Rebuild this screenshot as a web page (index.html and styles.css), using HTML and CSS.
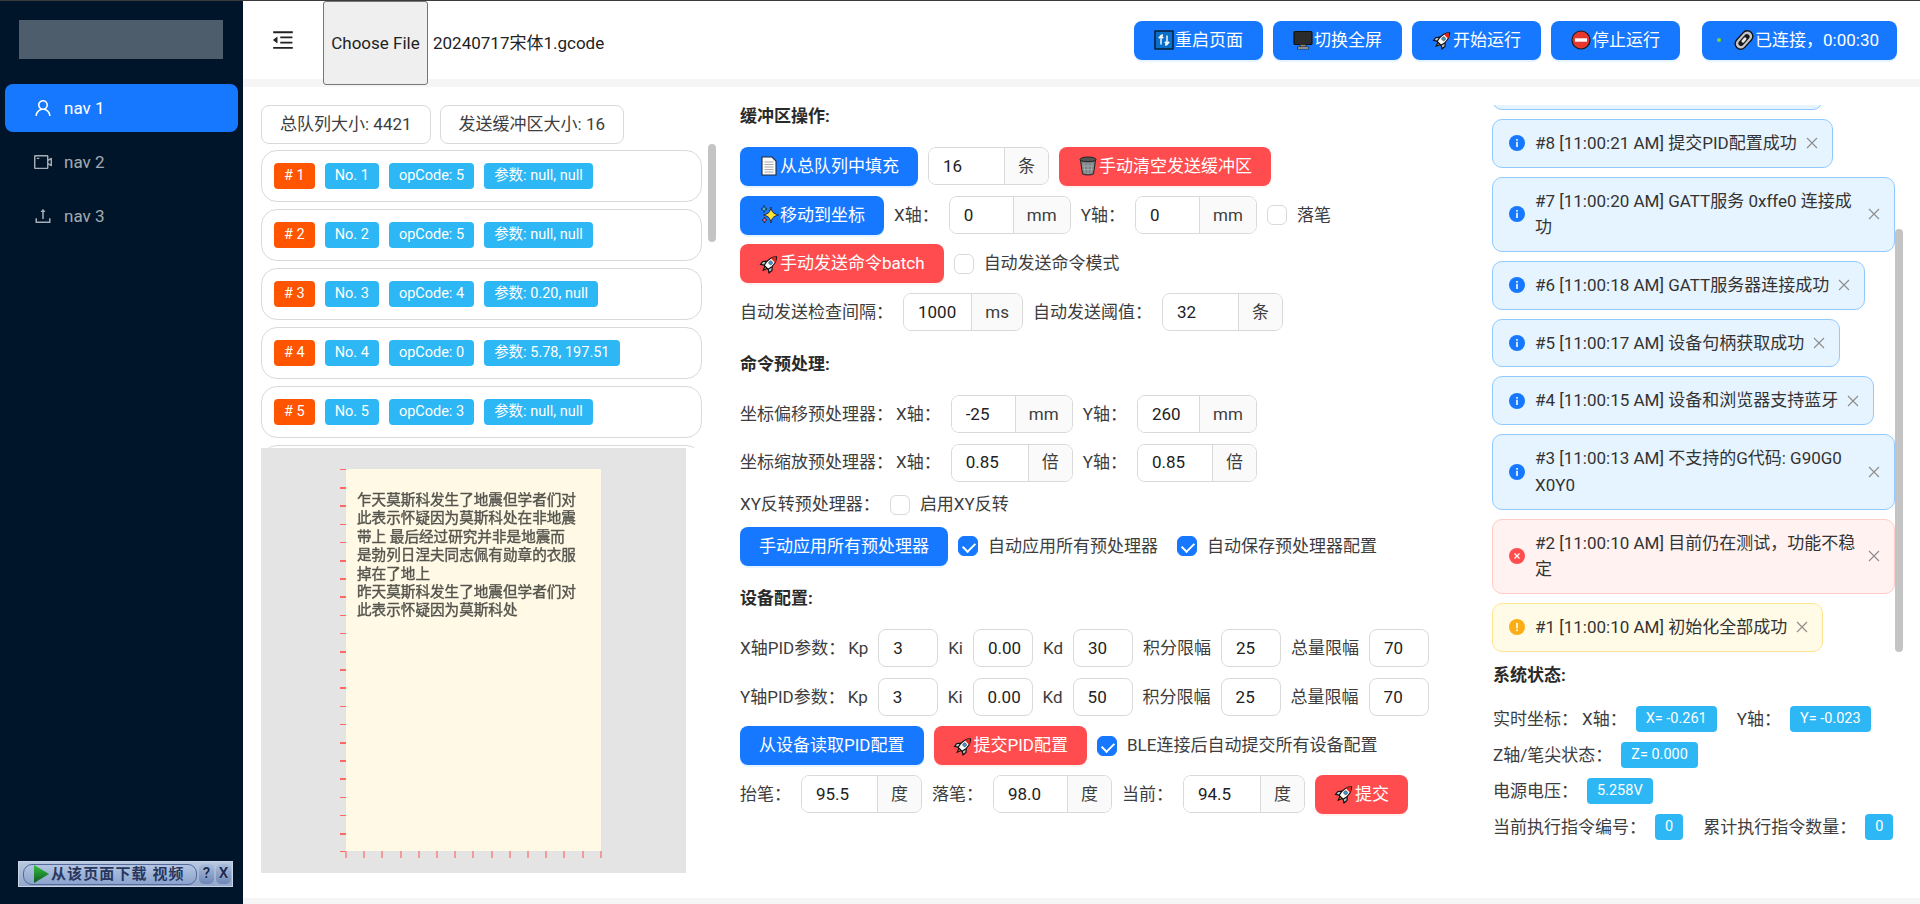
FILE: index.html
```html
<!DOCTYPE html>
<html lang="zh-CN">
<head>
  <meta charset="UTF-8" />
  <meta name="viewport" content="width=device-width, initial-scale=1.0"/>
  <title>Plotter</title>
  <link rel="stylesheet" href="styles.css">
</head>
<body>
  <!-- emoji drawn once, reused below -->
  <svg class="defs" aria-hidden="true">
    <symbol id="e-sync" viewBox="0 0 20 20">
      <rect x="1" y="1" width="18" height="18" fill="#0a6fc8" stroke="#07192b" stroke-width="1.400"/>
      <path d="M7 14.500V7c0-1.500 1-2 2-2M4.800 8.200 7 5.600 9.200 8.200M13 5.500V13c0 1.500-1 2-2 2M10.800 11.800l2.200 2.600 2.200-2.600" fill="none" stroke="#fff" stroke-width="1.400"/>
    </symbol>
    <symbol id="e-monitor" viewBox="0 0 20 20">
      <rect x="1" y="1.500" width="18" height="13" rx="1" fill="#2b2b2b" stroke="#111" stroke-width="1.200"/>
      <rect x="7" y="14.500" width="6" height="2.500" fill="#888" stroke="#222" stroke-width=".7"/>
      <rect x="4.500" y="17" width="11" height="2" fill="#c8c8c8" stroke="#222" stroke-width=".7"/>
    </symbol>
    <symbol id="e-rocket" viewBox="0 0 20 20">
      <g transform="translate(1 -.5) rotate(45 10 10) scale(.92) translate(.8 .8)">
        <path d="M6.500 10 3 14l.5 4 4-2.500zM13.500 10l3.500 4-.5 4-4-2.500z" fill="#b9c2cc" stroke="#111" stroke-width="1.300"/>
        <path d="M8 15.500l2 5 2-5z" fill="#f7941e" stroke="#111" stroke-width="1.200"/>
        <path d="M10 0C13.500 3 14 7 14 11l-1 5H7l-1-5c0-4 .5-8 4-11z" fill="#fbfbfb" stroke="#111" stroke-width="1.300"/>
        <path d="M10 .6c1.800 1.500 2.800 3 3.300 4.900H6.700C7.200 3.600 8.200 2.100 10 .6z" fill="#e2231a"/>
        <circle cx="10" cy="9" r="2" fill="#3b9ae1" stroke="#555" stroke-width=".8"/>
      </g>
    </symbol>
    <symbol id="e-stop" viewBox="0 0 20 20">
      <circle cx="10" cy="10" r="9" fill="#e8382d" stroke="#1c1c1c" stroke-width="1.200"/>
      <rect x="4" y="8.300" width="12" height="3.400" fill="#fff"/>
    </symbol>
    <symbol id="e-link" viewBox="0 0 20 20">
      <g transform="rotate(-48 10 10)">
        <rect x="-.5" y="4.500" width="21" height="11" rx="5.500" fill="#c4c6c9" stroke="#111" stroke-width="1.400"/>
        <rect x="3" y="7.300" width="14" height="5.400" rx="2.700" fill="#1a1a1a"/>
        <rect x="7" y="8.600" width="6" height="2.800" rx="1.400" fill="#e8e8e8"/>
      </g>
    </symbol>
    <symbol id="e-page" viewBox="0 0 20 20">
      <path d="M3 1h10l4 4v14H3z" fill="#fafafa" stroke="#1f2a3a" stroke-width="1.100"/>
      <path d="M5.500 6h9M5.500 8.500h9M5.500 11h9M5.500 13.500h9M5.500 16h9" stroke="#a9a9a9" stroke-width="1"/>
    </symbol>
    <symbol id="e-trash" viewBox="0 0 20 20">
      <ellipse cx="10" cy="3.500" rx="8" ry="2.500" fill="#555" stroke="#222" stroke-width="1"/>
      <path d="M2.500 4.500 4.500 18c2 1.300 9 1.300 11 0l2-13.500c-3 1.500-12 1.500-15 0z" fill="#7d8487" stroke="#222" stroke-width="1"/>
      <path d="M6 7l1 10M10 7.500V18M14 7l-1 10M4 10h12M4.500 13.500h11" stroke="#a5abad" stroke-width=".8"/>
    </symbol>
    <symbol id="e-spark" viewBox="0 0 20 20">
      <path d="M12 2c.8 5 2.200 6.700 7.500 8-5.300 1.300-6.700 3-7.500 8-.8-5-2.200-6.700-7.500-8C9.800 8.700 11.200 7 12 2z" fill="#ffe23b" stroke="#222" stroke-width=".9"/>
      <path d="M5 .5c.3 2 1 2.700 3 3.500-2 .8-2.700 1.500-3 3.500-.3-2-1-2.700-3-3.500 2-.8 2.700-1.500 3-3.500z" fill="#3fb4d8" stroke="#222" stroke-width=".8"/>
      <path d="M5.500 12c.3 1.800.9 2.400 2.500 3-1.600.6-2.200 1.200-2.500 3-.3-1.800-.9-2.400-2.500-3 1.600-.6 2.200-1.200 2.500-3z" fill="#e56bb0" stroke="#222" stroke-width=".8"/>
    </symbol>
    <symbol id="a-info" viewBox="0 0 16 16">
      <circle cx="8" cy="8" r="8" fill="#1677ff"/>
      <rect x="7.200" y="6.800" width="1.600" height="5.200" fill="#fff"/>
      <rect x="7.200" y="4" width="1.600" height="1.700" fill="#fff"/>
    </symbol>
    <symbol id="a-close" viewBox="0 0 12 12">
      <path d="M1 1l10 10M11 1 1 11" stroke="#8c8c8c" stroke-width="1.100" fill="none"/>
    </symbol>
  </svg>

  <div class="app">
    <aside class="sidebar">
      <div class="logo"></div>
      <nav class="menu">
        <a class="menu-item active">
          <svg class="menu-icon" viewBox="64 64 896 896"><path d="M858.5 763.6a374 374 0 00-80.6-119.5 375.63 375.63 0 00-119.5-80.6c-.4-.2-.8-.3-1.2-.5C719.5 518 760 444.7 760 362c0-137-111-248-248-248S264 225 264 362c0 82.7 40.5 156 102.8 201.1-.4.2-.8.3-1.2.5-44.8 18.9-85 46-119.5 80.6a375.63 375.63 0 00-80.6 119.5A371.7 371.7 0 00136 901.8a8 8 0 008 8.2h60c4.4 0 7.9-3.5 8-7.8 2-77.2 33-149.5 87.8-204.3 56.7-56.7 132-87.9 212.2-87.9s155.5 31.2 212.2 87.9C779 752.7 810 825 812 902.2c.1 4.4 3.6 7.8 8 7.8h60a8 8 0 008-8.2c-1-47.8-10.9-94.3-29.5-138.2zM512 534c-45.9 0-89.1-17.9-121.6-50.4S340 407.9 340 362c0-45.9 17.9-89.1 50.4-121.6S466.1 190 512 190s89.1 17.9 121.6 50.4S684 316.1 684 362c0 45.9-17.9 89.1-50.4 121.6S557.9 534 512 534z"/></svg>
          nav 1
        </a>
        <a class="menu-item">
          <svg class="menu-icon" viewBox="64 64 896 896"><path d="M912 302.3L784 376V224c0-35.3-28.7-64-64-64H128c-35.3 0-64 28.7-64 64v576c0 35.3 28.7 64 64 64h592c35.3 0 64-28.7 64-64V648l128 73.7c21.3 12.3 48-3.1 48-27.6V330c0-24.6-26.7-40-48-27.7zM712 792H136V232h576v560zm176-167l-104-59.8V458.9L888 399v226zM208 360h112c4.4 0 8-3.6 8-8v-48c0-4.4-3.6-8-8-8H208c-4.4 0-8 3.6-8 8v48c0 4.4 3.6 8 8 8z"/></svg>
          nav 2
        </a>
        <a class="menu-item">
          <svg class="menu-icon" viewBox="64 64 896 896"><path d="M400 317.7h73.9V656c0 4.4 3.6 8 8 8h60c4.4 0 8-3.6 8-8V317.7H624c6.7 0 10.4-7.7 6.3-12.9L518.3 163a8 8 0 00-12.6 0l-112 141.7c-4.1 5.3-.4 13 6.3 13zM878 626h-60c-4.4 0-8 3.6-8 8v154H214V634c0-4.4-3.6-8-8-8h-60c-4.4 0-8 3.6-8 8v198c0 17.7 14.3 32 32 32h684c17.7 0 32-14.3 32-32V634c0-4.4-3.6-8-8-8z"/></svg>
          nav 3
        </a>
      </nav>
      <div class="grab-bar">
        <div class="grab-main"><span class="grab-play"></span>从该页面下载 视频</div>
        <span class="grab-mini">?</span>
        <span class="grab-mini">X</span>
      </div>
    </aside>

    <div class="main">
      <header class="topbar">
        <svg class="fold-icon" viewBox="64 64 896 896"><path d="M408 442h480c4.4 0 8-3.6 8-8v-56c0-4.4-3.6-8-8-8H408c-4.4 0-8 3.6-8 8v56c0 4.4 3.6 8 8 8zm-8 204c0 4.4 3.6 8 8 8h480c4.4 0 8-3.6 8-8v-56c0-4.4-3.6-8-8-8H408c-4.4 0-8 3.6-8 8v56zm504-486H120c-4.4 0-8 3.6-8 8v56c0 4.4 3.6 8 8 8h784c4.4 0 8-3.6 8-8v-56c0-4.4-3.6-8-8-8zm0 632H120c-4.4 0-8 3.6-8 8v56c0 4.4 3.6 8 8 8h784c4.4 0 8-3.6 8-8v-56c0-4.4-3.6-8-8-8zM115.4 518.9L271.7 642c5.8 4.6 14.4.5 14.4-6.9V388.9c0-7.4-8.5-11.5-14.4-6.9L115.4 505.1a8.74 8.74 0 000 13.8z"/></svg>
        <button class="file-btn">Choose File</button>
        <span class="file-name">20240717宋体1.gcode</span>
        <div class="top-actions">
          <button class="btn"><svg class="emoji"><use href="#e-sync"/></svg>重启页面</button>
          <button class="btn"><svg class="emoji"><use href="#e-monitor"/></svg>切换全屏</button>
          <button class="btn"><svg class="emoji"><use href="#e-rocket"/></svg>开始运行</button>
          <button class="btn"><svg class="emoji"><use href="#e-stop"/></svg>停止运行</button>
          <button class="btn conn-btn"><span class="conn-dot"></span><svg class="emoji"><use href="#e-link"/></svg>已连接，0:00:30</button>
        </div>
      </header>

      <main class="content">
        <section class="col-queue">
          <div class="queue-sizes">
            <span class="size-box">总队列大小: 4421</span>
            <span class="size-box">发送缓冲区大小: 16</span>
          </div>
          <div class="queue-list">
            <div class="queue-item"><span class="tag tag-orange"># 1</span><span class="tag">No. 1</span><span class="tag">opCode: 5</span><span class="tag">参数: null, null</span></div>
            <div class="queue-item"><span class="tag tag-orange"># 2</span><span class="tag">No. 2</span><span class="tag">opCode: 5</span><span class="tag">参数: null, null</span></div>
            <div class="queue-item"><span class="tag tag-orange"># 3</span><span class="tag">No. 3</span><span class="tag">opCode: 4</span><span class="tag">参数: 0.20, null</span></div>
            <div class="queue-item"><span class="tag tag-orange"># 4</span><span class="tag">No. 4</span><span class="tag">opCode: 0</span><span class="tag">参数: 5.78, 197.51</span></div>
            <div class="queue-item"><span class="tag tag-orange"># 5</span><span class="tag">No. 5</span><span class="tag">opCode: 3</span><span class="tag">参数: null, null</span></div>
            <div class="queue-item"></div>
            <div class="scroll-thumb queue-thumb"></div>
          </div>
          <div class="preview">
            <div class="paper">
              <div class="ink">乍天莫斯科发生了地震但学者们对
此表示怀疑因为莫斯科处在非地震
带上 最后经过研究并非是地震而
是勃列日涅夫同志佩有勋章的衣服
掉在了地上
昨天莫斯科发生了地震但学者们对
此表示怀疑因为莫斯科处</div>
            </div>
          </div>
        </section>

        <section class="col-form">
          <h4 class="title">缓冲区操作:</h4>
          <div class="row">
            <button class="btn"><svg class="emoji"><use href="#e-page"/></svg>从总队列中填充</button>
            <div class="field w-121"><input value="16"><span class="unit">条</span></div>
            <button class="btn btn-red"><svg class="emoji"><use href="#e-trash"/></svg>手动清空发送缓冲区</button>
          </div>
          <div class="row">
            <button class="btn"><svg class="emoji"><use href="#e-spark"/></svg>移动到坐标</button>
            <span class="label">X轴：</span>
            <div class="field w-122"><input value="0"><span class="unit">mm</span></div>
            <span class="label">Y轴：</span>
            <div class="field w-122"><input value="0"><span class="unit">mm</span></div>
            <input type="checkbox" class="check">
            <span class="label">落笔</span>
          </div>
          <div class="row">
            <button class="btn btn-red"><svg class="emoji"><use href="#e-rocket"/></svg>手动发送命令batch</button>
            <input type="checkbox" class="check">
            <span class="label">自动发送命令模式</span>
          </div>
          <div class="row">
            <span class="label">自动发送检查间隔：</span>
            <div class="field w-120"><input value="1000"><span class="unit">ms</span></div>
            <span class="label">自动发送阈值：</span>
            <div class="field w-121"><input value="32"><span class="unit">条</span></div>
          </div>

          <h4 class="title">命令预处理:</h4>
          <div class="row">
            <span class="label label-tight">坐标偏移预处理器：</span>
            <span class="label">X轴：</span>
            <div class="field w-122"><input value="-25"><span class="unit">mm</span></div>
            <span class="label">Y轴：</span>
            <div class="field w-120"><input value="260"><span class="unit">mm</span></div>
          </div>
          <div class="row">
            <span class="label label-tight">坐标缩放预处理器：</span>
            <span class="label">X轴：</span>
            <div class="field w-122"><input value="0.85"><span class="unit">倍</span></div>
            <span class="label">Y轴：</span>
            <div class="field w-120"><input value="0.85"><span class="unit">倍</span></div>
          </div>
          <div class="row row-short">
            <span class="label">XY反转预处理器：</span>
            <input type="checkbox" class="check">
            <span class="label">启用XY反转</span>
          </div>
          <div class="row">
            <button class="btn">手动应用所有预处理器</button>
            <input type="checkbox" class="check" checked>
            <span class="label">自动应用所有预处理器</span>
            <input type="checkbox" class="check check-gap" checked>
            <span class="label">自动保存预处理器配置</span>
          </div>

          <h4 class="title">设备配置:</h4>
          <div class="row">
            <span class="label label-tight">X轴PID参数：</span>
            <span class="label">Kp</span><input class="pid" value="3">
            <span class="label">Ki</span><input class="pid" value="0.00">
            <span class="label">Kd</span><input class="pid" value="30">
            <span class="label">积分限幅</span><input class="pid" value="25">
            <span class="label">总量限幅</span><input class="pid" value="70">
          </div>
          <div class="row">
            <span class="label label-tight">Y轴PID参数：</span>
            <span class="label">Kp</span><input class="pid" value="3">
            <span class="label">Ki</span><input class="pid" value="0.00">
            <span class="label">Kd</span><input class="pid" value="50">
            <span class="label">积分限幅</span><input class="pid" value="25">
            <span class="label">总量限幅</span><input class="pid" value="70">
          </div>
          <div class="row">
            <button class="btn">从设备读取PID配置</button>
            <button class="btn btn-red"><svg class="emoji"><use href="#e-rocket"/></svg>提交PID配置</button>
            <input type="checkbox" class="check" checked>
            <span class="label">BLE连接后自动提交所有设备配置</span>
          </div>
          <div class="row">
            <span class="label">抬笔：</span>
            <div class="field w-121"><input value="95.5"><span class="unit">度</span></div>
            <span class="label">落笔：</span>
            <div class="field w-119"><input value="98.0"><span class="unit">度</span></div>
            <span class="label">当前：</span>
            <div class="field w-122"><input value="94.5"><span class="unit">度</span></div>
            <button class="btn btn-red"><svg class="emoji"><use href="#e-rocket"/></svg>提交</button>
          </div>
        </section>

        <section class="col-log">
          <div class="log-list">
            <div class="alert alert-clipped"></div>
            <div class="alert"><svg class="alert-icon"><use href="#a-info"/></svg><span class="alert-text">#8 [11:00:21 AM] 提交PID配置成功</span><svg class="alert-close"><use href="#a-close"/></svg></div>
            <div class="alert"><svg class="alert-icon"><use href="#a-info"/></svg><span class="alert-text">#7 [11:00:20 AM] GATT服务 0xffe0 连接成功</span><svg class="alert-close"><use href="#a-close"/></svg></div>
            <div class="alert"><svg class="alert-icon"><use href="#a-info"/></svg><span class="alert-text">#6 [11:00:18 AM] GATT服务器连接成功</span><svg class="alert-close"><use href="#a-close"/></svg></div>
            <div class="alert"><svg class="alert-icon"><use href="#a-info"/></svg><span class="alert-text">#5 [11:00:17 AM] 设备句柄获取成功</span><svg class="alert-close"><use href="#a-close"/></svg></div>
            <div class="alert"><svg class="alert-icon"><use href="#a-info"/></svg><span class="alert-text">#4 [11:00:15 AM] 设备和浏览器支持蓝牙</span><svg class="alert-close"><use href="#a-close"/></svg></div>
            <div class="alert"><svg class="alert-icon"><use href="#a-info"/></svg><span class="alert-text">#3 [11:00:13 AM] 不支持的G代码: G90G0 X0Y0</span><svg class="alert-close"><use href="#a-close"/></svg></div>
            <div class="alert alert-error">
              <svg class="alert-icon" viewBox="0 0 16 16"><circle cx="8" cy="8" r="8" fill="#ff4d4f"/><path d="M5.500 5.500l5 5M10.500 5.500l-5 5" stroke="#fff" stroke-width="1.200"/></svg>
              <span class="alert-text">#2 [11:00:10 AM] 目前仍在测试，功能不稳定</span><svg class="alert-close"><use href="#a-close"/></svg>
            </div>
            <div class="alert alert-warn">
              <svg class="alert-icon" viewBox="0 0 16 16"><circle cx="8" cy="8" r="8" fill="#faad14"/><rect x="7.200" y="3.800" width="1.600" height="5.600" fill="#fff"/><rect x="7.200" y="10.500" width="1.600" height="1.700" fill="#fff"/></svg>
              <span class="alert-text">#1 [11:00:10 AM] 初始化全部成功</span><svg class="alert-close"><use href="#a-close"/></svg>
            </div>
            <div class="scroll-thumb log-thumb"></div>
          </div>

          <h4 class="title status-title">系统状态:</h4>
          <div class="status-row">
            <span class="label label-tight">实时坐标：</span>
            <span class="label">X轴：</span>
            <span class="tag">X= -0.261</span>
            <span class="label label-next">Y轴：</span>
            <span class="tag">Y= -0.023</span>
          </div>
          <div class="status-row">
            <span class="label">Z轴/笔尖状态：</span>
            <span class="tag">Z= 0.000</span>
          </div>
          <div class="status-row">
            <span class="label">电源电压：</span>
            <span class="tag">5.258V</span>
          </div>
          <div class="status-row">
            <span class="label">当前执行指令编号：</span>
            <span class="tag">0</span>
            <span class="label label-next">累计执行指令数量：</span>
            <span class="tag">0</span>
          </div>
        </section>
      </main>
    </div>
  </div>
</body>
</html>
```

FILE: styles.css
```css
:root {
  --blue: #1677ff;
  --red: #ff4d4f;
  --cyan: #2db7f5;
  --line: #d9d9d9;
  --text: #3d3d3d;
}

* {
  box-sizing: border-box;
}

html, body {
  height: 100%;
}

body {
  margin: 0;
  overflow: hidden;
  font-family: Roboto, "Noto Sans CJK SC", sans-serif;
  font-size: 17px;
  line-height: 1.57;
  color: var(--text);
  background: #f5f5f5;
}

.defs {
  position: absolute;
  width: 0;
  height: 0;
}

.app {
  display: flex;
  height: 904px;
  border-top: 1px solid #3b3b3b;
}

/* sidebar */
.sidebar {
  display: flex;
  flex-direction: column;
  width: 243px;
  flex: none;
  background: #001529;
}

.logo {
  height: 39px;
  margin: 19px 20px 25px 19px;
  background: #4e5d6b;
}

.menu {
  display: flex;
  flex-direction: column;
  gap: 6px;
  padding: 0 5px;
}

.menu-item {
  display: flex;
  align-items: center;
  gap: 12px;
  height: 48px;
  padding-left: 29px;
  border-radius: 8px;
  color: rgba(255, 255, 255, 0.65);
}

.menu-item.active {
  background: var(--blue);
  color: #fff;
}

.menu-icon {
  width: 18px;
  height: 18px;
  fill: currentColor;
}

.grab-bar {
  display: flex;
  align-items: center;
  gap: 2px;
  width: 215px;
  height: 26px;
  margin: auto 0 17px 18px;
  padding: 0 1px 0 4px;
  background: linear-gradient(#b9c8e0, #93a8cb);
  border: 1px solid #c9d4e6;
}

.grab-main {
  display: flex;
  align-items: center;
  flex: 1;
  height: 21px;
  padding-left: 10px;
  font-size: 15px;
  font-weight: 700;
  letter-spacing: 1.100px;
  line-height: 20px;
  white-space: nowrap;
  color: #27375f;
  background: linear-gradient(#b4c5e2, #8ba3cd);
  border: 1px solid #55699a;
  border-radius: 9px;
}

.grab-play {
  width: 15px;
  height: 18px;
  margin-right: 2px;
  flex: none;
  background: linear-gradient(#36c13a, #0d5a25);
  clip-path: polygon(0 0, 100% 50%, 0 100%);
}

.grab-mini {
  width: 15px;
  height: 20px;
  font-size: 15px;
  font-weight: 700;
  line-height: 19px;
  text-align: center;
  color: #1d2c55;
  text-shadow: 0 0 1px #e6edf8;
  background: linear-gradient(#a9bcdc, #6d87b6);
  border-radius: 5px;
}

/* top bar */
.main {
  flex: 1;
  display: flex;
  flex-direction: column;
  min-width: 0;
}

.topbar {
  display: flex;
  align-items: center;
  height: 78px;
  flex: none;
  padding: 0 23px 0 29px;
  background: #fff;
}

.fold-icon {
  width: 22px;
  height: 22px;
  flex: none;
  fill: #222;
}

.file-btn {
  align-self: flex-start;
  width: 105px;
  height: 84px;
  margin-left: 29px;
  padding: 0;
  font: inherit;
  color: #222;
  background: #efefef;
  border: 1px solid #767676;
  border-radius: 3px;
  position: relative;
  z-index: 1;
}

.file-name {
  margin: 6px 0 0 5px;
  color: #222;
}

.top-actions {
  display: flex;
  align-items: center;
  gap: 10px;
  margin-left: auto;
}

.top-actions .btn {
  padding: 0 20px;
}

.top-actions .conn-btn {
  margin-left: 12px;
  padding: 0 18px 0 15px;
}

.conn-dot {
  width: 4px;
  height: 4px;
  margin-right: 13px;
  border-radius: 50%;
  background: #7fd52c;
}

.btn {
  display: inline-flex;
  align-items: center;
  justify-content: center;
  height: 39px;
  flex: none;
  padding: 0 19px;
  font: inherit;
  line-height: 1;
  color: #fff;
  background: var(--blue);
  border: none;
  border-radius: 8px;
  box-shadow: 0 2px 0 rgba(5, 145, 255, 0.1);
}

.btn-red {
  background: var(--red);
  box-shadow: 0 2px 0 rgba(255, 38, 5, 0.06);
}

.emoji {
  width: 20px;
  height: 20px;
  margin-right: 1px;
  flex: none;
}

/* three columns */
.content {
  display: grid;
  grid-template-columns: 497px 752px 1fr;
  height: 811px;
  margin-top: 8px;
  background: #fff;
}

.col-queue {
  padding: 18px 0 0 18px;
}

.queue-sizes {
  display: flex;
  gap: 9px;
  height: 39px;
}

.size-box {
  display: flex;
  align-items: center;
  padding: 0 18px;
  border: 1px solid var(--line);
  border-radius: 8px;
}

.queue-list {
  position: relative;
  display: flex;
  flex-direction: column;
  gap: 7px;
  height: 304px;
  padding-top: 6px;
  overflow: hidden;
}

.queue-item {
  display: flex;
  align-items: center;
  gap: 10px;
  width: 441px;
  height: 52px;
  flex: none;
  padding: 0 12px;
  border: 1px solid var(--line);
  border-radius: 16px;
}

.tag {
  display: inline-flex;
  align-items: center;
  height: 26px;
  flex: none;
  padding: 0 10px;
  font-size: 14.500px;
  line-height: 1;
  color: #fff;
  background: var(--cyan);
  border-radius: 4px;
}

.tag-orange {
  background: #f50;
}

.scroll-thumb {
  position: absolute;
  width: 8px;
  background: #c4c4c4;
  border-radius: 4px;
}

.queue-thumb {
  top: 0;
  left: 447px;
  height: 98px;
}

.preview {
  display: flex;
  justify-content: center;
  width: 425px;
  height: 425px;
  padding-top: 21px;
  background: #e4e4e4;
}

.paper {
  position: relative;
  width: 255px;
  height: 382px;
  padding: 22px 0 0 11px;
  background: #fff9e6;
}

/* axis ticks of the drawing */
.paper::before {
  content: "";
  position: absolute;
  top: 0;
  bottom: -1px;
  left: -6px;
  width: 6px;
  background: repeating-linear-gradient(to bottom, #f66 0 1.500px, transparent 1.500px 18.2px);
}

.paper::after {
  content: "";
  position: absolute;
  top: 100%;
  left: -1px;
  right: -1px;
  height: 7px;
  background: repeating-linear-gradient(to right, #f39a9a 0 2px, transparent 2px 18.2px);
}

.ink {
  font-size: 14.6px;
  line-height: 18.4px;
  white-space: pre;
  color: #55554e;
  -webkit-text-stroke: 0.4px #55554e;
  filter: blur(0.45px);
}

/* form column */
.col-form {
  padding-top: 16px;
}

.title {
  height: 27px;
  margin: 0 0 17px;
  font-size: 17px;
  font-weight: 700;
  line-height: 27px;
  color: #2a2a2a;
}

.row + .title {
  margin-top: 19px;
}

.row {
  display: flex;
  align-items: center;
  gap: 10px;
  height: 38.700px;
  margin-bottom: 10px;
}

.row:has(+ .title) {
  margin-bottom: 0;
}

.row-short {
  height: 25px;
}

.label {
  flex: none;
  white-space: nowrap;
}

.label-tight {
  margin-right: -5px;
}

.row .label-tight {
  margin-right: -7px;
}

.field {
  display: flex;
  height: 38px;
  flex: none;
  border: 1px solid var(--line);
  border-radius: 8px;
  overflow: hidden;
}

.w-119 { width: 119px; }
.w-120 { width: 120px; }
.w-121 { width: 121px; }
.w-122 { width: 122px; }

.field input {
  flex: 1;
  min-width: 0;
  padding: 0 0 0 14px;
  font: inherit;
  color: #222;
  border: none;
  outline: none;
}

.unit {
  display: flex;
  align-items: center;
  padding: 0 13px;
  background: #fafafa;
  border-left: 1px solid var(--line);
}

.pid {
  width: 60px;
  height: 38px;
  flex: none;
  padding: 0 0 0 14px;
  font: inherit;
  color: #222;
  border: 1px solid var(--line);
  border-radius: 8px;
  outline: none;
}

.check {
  position: relative;
  width: 20px;
  height: 20px;
  flex: none;
  margin: 0;
  appearance: none;
  background: #fff;
  border: 1px solid var(--line);
  border-radius: 6px;
}

.check:checked {
  background: var(--blue);
  border-color: var(--blue);
}

.check:checked::after {
  content: "";
  position: absolute;
  top: 3px;
  left: 5.500px;
  width: 6px;
  height: 10px;
  border: solid #fff;
  border-width: 0 2px 2px 0;
  transform: rotate(45deg);
}

.check-gap {
  margin-left: 9px;
}

/* log column */
.col-log {
  padding-top: 18px;
}

.log-list {
  position: relative;
  display: flex;
  flex-direction: column;
  align-items: flex-start;
  gap: 9px;
  width: 411px;
  height: 547px;
  overflow: hidden;
}

.alert {
  display: flex;
  align-items: center;
  max-width: 403px;
  padding: 10px 14px 10px 16px;
  flex: none;
  color: #333;
  background: #e6f4ff;
  border: 1px solid #91caff;
  border-radius: 10px;
}

.alert-clipped {
  width: 331px;
  height: 49px;
  margin-top: -44px;
}

.alert-error {
  background: #fff2f0;
  border-color: #ffccc7;
}

.alert-warn {
  background: #fffbe6;
  border-color: #ffe58f;
}

.alert-icon {
  width: 16px;
  height: 16px;
  margin-right: 10px;
  flex: none;
}

.alert-text {
  flex: 1;
}

.alert-close {
  width: 12px;
  height: 12px;
  margin-left: 9px;
  flex: none;
}

.log-thumb {
  top: 124px;
  right: 0;
  height: 423px;
}

.status-title {
  margin: 10px 0 17px 1px;
}

.status-row {
  display: flex;
  align-items: center;
  gap: 9px;
  height: 26px;
  margin: 0 0 10px 1px;
}

.label-next {
  margin-left: 11px;
}
```
